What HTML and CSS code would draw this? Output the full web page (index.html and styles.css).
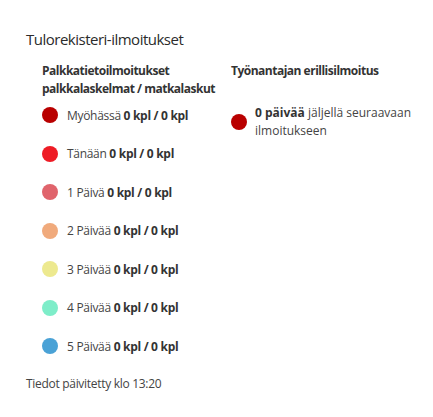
FILE: index.html
```html
<!DOCTYPE html>
<html lang="fi">
<head>
    <meta charset="UTF-8">
    <meta name="viewport" content="width=device-width, initial-scale=1.0">
    <title>Tulorekisteri-ilmoitukset</title>
    <link rel="stylesheet" href="styles.css">
</head>
<body>

<div class="panel">
    <h2>Tulorekisteri-ilmoitukset</h2>

    <div class="columns">
        <!-- Palkkatietoilmoitukset -->
        <div class="column">
            <h3>Palkkatietoilmoitukset<br>palkkalaskelmat / matkalaskut</h3>
            <ul class="status-list">
                <li><span class="dot late"></span><span>Myöhässä <b>0 kpl / 0 kpl</b></span></li>
                <li><span class="dot today"></span><span>Tänään <b>0 kpl / 0 kpl</b></span></li>
                <li><span class="dot day1"></span><span>1 Päivä <b>0 kpl / 0 kpl</b></span></li>
                <li><span class="dot day2"></span><span>2 Päivää <b>0 kpl / 0 kpl</b></span></li>
                <li><span class="dot day3"></span><span>3 Päivää <b>0 kpl / 0 kpl</b></span></li>
                <li><span class="dot day4"></span><span>4 Päivää <b>0 kpl / 0 kpl</b></span></li>
                <li><span class="dot day5"></span><span>5 Päivää <b>0 kpl / 0 kpl</b></span></li>
            </ul>
        </div>

        <!-- Työnantajan erillisilmoitus -->
        <div class="column">
            <h3>Työnantajan erillisilmoitus</h3>
            <div class="notice">
                <span class="dot late"></span>
                <p><b>0 päivää</b> jäljellä seuraavaan ilmoitukseen</p>
            </div>
        </div>
    </div>

    <p class="updated">Tiedot päivitetty klo 13:20</p>
</div>

</body>
</html>
```

FILE: styles.css
```css
/* Reset default margin and padding */
body, h2, h3, p, ul, li {
    margin: 0;
    padding: 0;
}

body {
    font-family: "Open Sans", Arial, sans-serif;
    color: #444;
    background-color: #fff;
    letter-spacing: -0.3px;
}

.panel {
    padding: 29px 26px 20px 26px;
}

h2 {
    font-size: 15px;
    font-weight: 400;
    line-height: 20px;
    color: #2b2b2b;
    letter-spacing: -0.5px;
}

.columns {
    display: grid;
    grid-template-columns: 189px 1fr;
    padding-left: 16px;
    margin-top: 13px;
}

h3 {
    font-size: 12px;
    font-weight: 700;
    line-height: 18px;
    color: #333;
    letter-spacing: -0.5px;
}

.status-list {
    list-style: none;
    display: flex;
    flex-direction: column;
    gap: 22.5px;
    margin-top: 9px;
}

.status-list li {
    display: flex;
    align-items: center;
    height: 16px;
    font-size: 12px;
    white-space: nowrap;
}

.status-list .dot {
    margin-right: 9px;
}

b {
    font-weight: 700;
    color: #333;
}

.dot {
    display: inline-block;
    width: 16px;
    height: 16px;
    border-radius: 50%;
    flex-shrink: 0;
}

.late  { background-color: #b90000; }
.today { background-color: #ee1c25; }
.day1  { background-color: #e0646c; }
.day2  { background-color: #f0aa7c; }
.day3  { background-color: #ede98f; }
.day4  { background-color: #7eedc9; }
.day5  { background-color: #4aa2d6; }

.notice {
    display: flex;
    align-items: center;
    gap: 8px;
    margin-top: 24px;
}

.notice p {
    font-size: 12px;
    line-height: 18px;
    width: 170px;
    letter-spacing: 0;
}

.updated {
    font-size: 12px;
    line-height: 18px;
    margin-top: 21px;
}
```
